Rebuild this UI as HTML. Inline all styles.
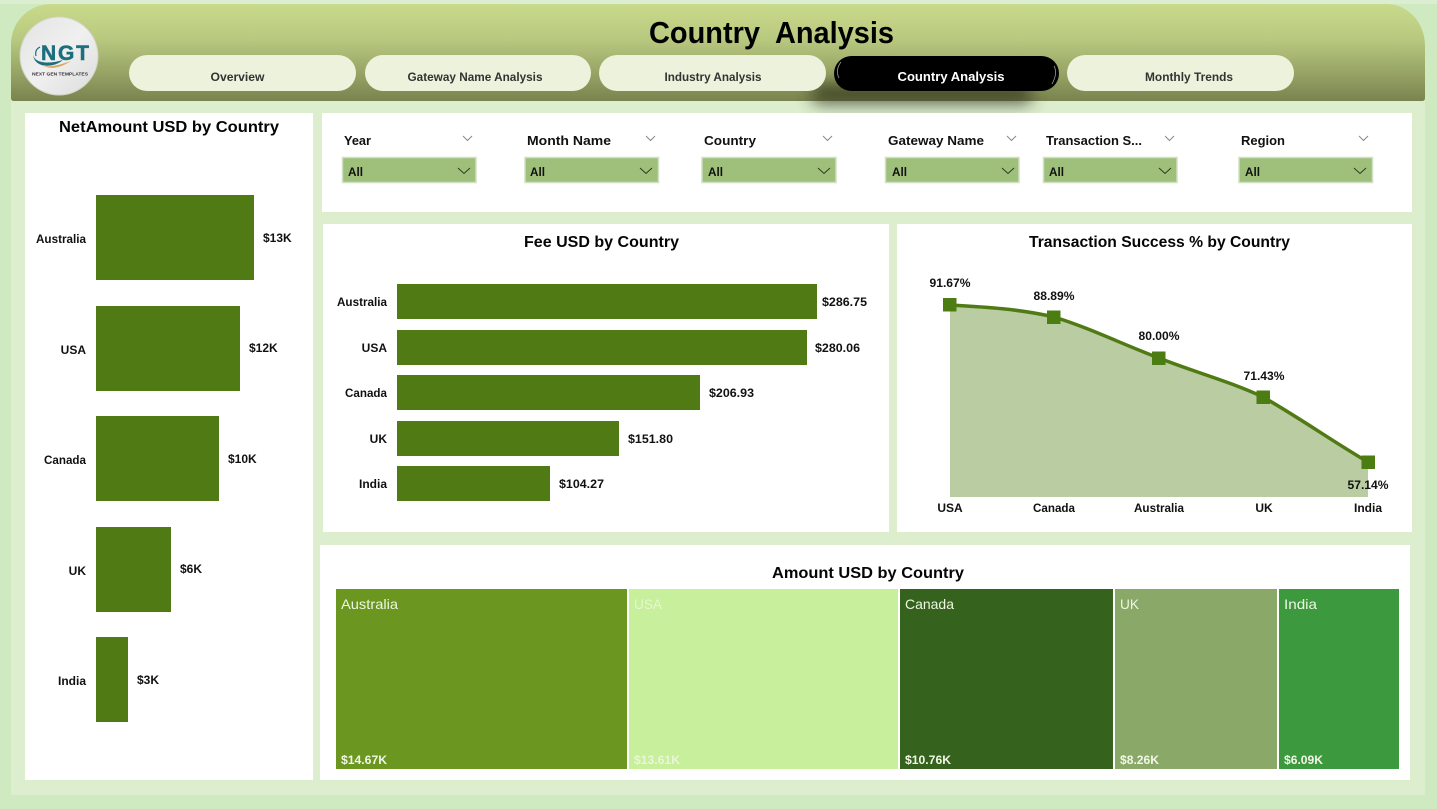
<!DOCTYPE html>
<html lang="en">
<head>
<meta charset="utf-8">
<title>Country Analysis</title>
<style>
html,body{margin:0;padding:0;background:#cfeac0;width:1437px;height:809px;overflow:hidden}
svg{display:block}
text{font-family:"Liberation Sans",Arial,sans-serif;font-weight:bold;fill:#111}
.t{font-size:16px;fill:#050505}
.l{font-size:12px}
.p{font-size:12px;fill:#333}
.s{font-size:13px}
.a{font-size:11.5px}
.n{font-size:14px;font-weight:normal;fill:#eef5e2}
.v{font-size:11.5px;fill:#f0f6e6}
</style>
</head>
<body>
<svg width="1437" height="809" viewBox="0 0 1437 809" xmlns="http://www.w3.org/2000/svg">
<defs>
<linearGradient id="h" x1="0" y1="0" x2="0" y2="1">
<stop offset="0" stop-color="#c9da8b"/>
<stop offset=".35" stop-color="#b9ca80"/>
<stop offset=".7" stop-color="#98a566"/>
<stop offset="1" stop-color="#79834f"/>
</linearGradient>
<linearGradient id="c" x1="0" y1="0" x2="1" y2="1">
<stop offset="0" stop-color="#e3e3e3"/>
<stop offset=".5" stop-color="#f0f0f0"/>
<stop offset="1" stop-color="#dcdcdc"/>
</linearGradient>
<filter id="b" x="-30%" y="-80%" width="160%" height="260%"><feGaussianBlur stdDeviation="8"/></filter>
</defs>

<rect width="1437" height="809" fill="#cfeac0"/>
<rect x="0" y="0" width="1437" height="4" fill="#dbeed1"/>
<rect x="11" y="60" width="1414" height="735" fill="#ddeecf"/>

<path d="M11 98V44A40 40 0 0 1 51 4H1387A38 42 0 0 1 1425 46V98Q1425 101 1422 101H14Q11 101 11 98Z" fill="url(#h)"/>

<circle cx="59" cy="56" r="39" fill="url(#c)" stroke="#d2d5c6" stroke-width="1"/>
<path d="M33 54C34 64 50 64 63 60C54 68 34 69 33 54Z" fill="#1d6f7d"/>
<path d="M44 66C54 67 62 64 71 61C62 67 52 70 44 66Z" fill="#d9a860"/>
<path d="M40 47C36 49 35 52 36 56" fill="none" stroke="#1d6f7d" stroke-width="1.200"/>
<text x="41" y="60" style="font-size:21px;fill:#1d6f7d;stroke:#1d6f7d;stroke-width:.5px;font-weight:bold" textLength="48" lengthAdjust="spacing">NGT</text>
<text x="32" y="75.500" style="font-size:4.500px;fill:#333" textLength="56" lengthAdjust="spacingAndGlyphs">NEXT GEN TEMPLATES</text>

<text x="771.500" y="43" text-anchor="middle" xml:space="preserve" style="font-size:31px;fill:#000" textLength="245" lengthAdjust="spacingAndGlyphs">Country  Analysis</text>

<rect x="812" y="84" width="220" height="20" rx="6" fill="#30351f" opacity=".75" filter="url(#b)"/>

<rect x="129" y="55" width="227" height="36" rx="18" fill="#ecf2dc"/>
<rect x="365" y="55" width="226" height="36" rx="18" fill="#ecf2dc"/>
<rect x="599" y="55" width="227" height="36" rx="18" fill="#ecf2dc"/>
<rect x="834" y="56" width="225" height="35" rx="17.500" fill="#000"/>
<path d="M839 78Q835 70 841 62" fill="none" stroke="#9a9e92" stroke-width=".8"/>
<path d="M1054 66Q1058 73 1052 84" fill="none" stroke="#9a9e92" stroke-width=".8"/>
<rect x="1067" y="55" width="227" height="36" rx="18" fill="#ecf2dc"/>
<text class="p" x="237.500" y="81" text-anchor="middle" textLength="54" lengthAdjust="spacingAndGlyphs">Overview</text>
<text class="p" x="475" y="81" text-anchor="middle" textLength="135" lengthAdjust="spacingAndGlyphs">Gateway Name Analysis</text>
<text class="p" x="713" y="81" text-anchor="middle" textLength="97" lengthAdjust="spacingAndGlyphs">Industry Analysis</text>
<text x="951" y="81" text-anchor="middle" style="font-size:13px;fill:#fff" textLength="107" lengthAdjust="spacingAndGlyphs">Country Analysis</text>
<text class="p" x="1189" y="81" text-anchor="middle" textLength="88" lengthAdjust="spacingAndGlyphs">Monthly Trends</text>

<rect x="25" y="113" width="288" height="667" fill="#fff"/>
<rect x="322" y="113" width="1090" height="99" fill="#fff"/>
<rect x="323" y="224" width="566" height="308" fill="#fff"/>
<rect x="897" y="224" width="515" height="308" fill="#fff"/>
<rect x="320" y="545" width="1090" height="235" fill="#fff"/>

<text class="t" x="169" y="132" text-anchor="middle" textLength="220" lengthAdjust="spacingAndGlyphs">NetAmount USD by Country</text>
<g fill="#507a14">
<rect x="96" y="195" width="158" height="85"/>
<rect x="96" y="306" width="144" height="85"/>
<rect x="96" y="416" width="123" height="85"/>
<rect x="96" y="527" width="75" height="85"/>
<rect x="96" y="637" width="32" height="85"/>
</g>
<g text-anchor="end">
<text class="l" x="86" y="243" textLength="50" lengthAdjust="spacingAndGlyphs">Australia</text>
<text class="l" x="86" y="354">USA</text>
<text class="l" x="86" y="464" textLength="42" lengthAdjust="spacingAndGlyphs">Canada</text>
<text class="l" x="86" y="575">UK</text>
<text class="l" x="86" y="685">India</text>
</g>
<text class="l" x="263" y="242">$13K</text>
<text class="l" x="249" y="352">$12K</text>
<text class="l" x="228" y="463">$10K</text>
<text class="l" x="180" y="573">$6K</text>
<text class="l" x="137" y="684">$3K</text>

<text class="s" x="344" y="145" textLength="27" lengthAdjust="spacingAndGlyphs">Year</text>
<text class="s" x="527" y="145" textLength="84" lengthAdjust="spacingAndGlyphs">Month Name</text>
<text class="s" x="704" y="145" textLength="52" lengthAdjust="spacingAndGlyphs">Country</text>
<text class="s" x="888" y="145" textLength="96" lengthAdjust="spacingAndGlyphs">Gateway Name</text>
<text class="s" x="1046" y="145" textLength="96" lengthAdjust="spacingAndGlyphs">Transaction S...</text>
<text class="s" x="1241" y="145" textLength="44" lengthAdjust="spacingAndGlyphs">Region</text>
<g fill="none" stroke="#8a8a8a" stroke-width="1">
<path d="M463 136l4.500 4.500 4.500-4.500M646 136l4.500 4.500 4.500-4.500M823 136l4.500 4.500 4.500-4.500M1007 136l4.500 4.500 4.500-4.500M1165 136l4.500 4.500 4.500-4.500M1359 136l4.500 4.500 4.500-4.500"/>
</g>
<g fill="#9fc07b" stroke="#d0e0c2" stroke-width="1.500">
<rect x="342.500" y="157.500" width="133.500" height="25"/>
<rect x="525" y="157.500" width="133.500" height="25"/>
<rect x="702" y="157.500" width="134" height="25"/>
<rect x="885.500" y="157.500" width="133.500" height="25"/>
<rect x="1043.500" y="157.500" width="133.500" height="25"/>
<rect x="1239" y="157.500" width="133.500" height="25"/>
</g>
<text class="l" x="348" y="176" textLength="15" lengthAdjust="spacingAndGlyphs">All</text>
<text class="l" x="530" y="176" textLength="15" lengthAdjust="spacingAndGlyphs">All</text>
<text class="l" x="708" y="176" textLength="15" lengthAdjust="spacingAndGlyphs">All</text>
<text class="l" x="892" y="176" textLength="15" lengthAdjust="spacingAndGlyphs">All</text>
<text class="l" x="1049" y="176" textLength="15" lengthAdjust="spacingAndGlyphs">All</text>
<text class="l" x="1245" y="176" textLength="15" lengthAdjust="spacingAndGlyphs">All</text>
<g fill="none" stroke="#2c3a1d" stroke-width="1">
<path d="M458 168l6 5.500 6-5.500M640 168l6 5.500 6-5.500M818 168l6 5.500 6-5.500M1002 168l6 5.500 6-5.500M1159 168l6 5.500 6-5.500M1354 168l6 5.500 6-5.500"/>
</g>

<text class="t" x="601.500" y="247" text-anchor="middle" textLength="155" lengthAdjust="spacingAndGlyphs">Fee USD by Country</text>
<g fill="#507a14">
<rect x="397" y="284" width="420" height="35"/>
<rect x="397" y="330" width="410" height="35"/>
<rect x="397" y="375" width="303" height="35"/>
<rect x="397" y="421" width="222" height="35"/>
<rect x="397" y="466" width="153" height="35"/>
</g>
<text class="l" x="387" y="306" text-anchor="end" textLength="50" lengthAdjust="spacingAndGlyphs">Australia</text>
<text class="l" x="387" y="352" text-anchor="end">USA</text>
<text class="l" x="387" y="397" text-anchor="end" textLength="42" lengthAdjust="spacingAndGlyphs">Canada</text>
<text class="l" x="387" y="443" text-anchor="end">UK</text>
<text class="l" x="387" y="488" text-anchor="end">India</text>
<text class="l" x="822" y="306" textLength="45" lengthAdjust="spacingAndGlyphs">$286.75</text>
<text class="l" x="815" y="352" textLength="45" lengthAdjust="spacingAndGlyphs">$280.06</text>
<text class="l" x="709" y="397" textLength="45" lengthAdjust="spacingAndGlyphs">$206.93</text>
<text class="l" x="628" y="443" textLength="45" lengthAdjust="spacingAndGlyphs">$151.80</text>
<text class="l" x="559" y="488" textLength="45" lengthAdjust="spacingAndGlyphs">$104.27</text>

<text class="t" x="1159.500" y="247" text-anchor="middle" textLength="261" lengthAdjust="spacingAndGlyphs">Transaction Success % by Country</text>
<path d="M950 305C985 307 1020 309 1054 317C1090 328 1124 345 1159 358C1194 372 1229 381 1263 397C1300 418 1335 443 1368 462V497H950Z" fill="#b9cca2"/>
<path d="M950 305C985 307 1020 309 1054 317C1090 328 1124 345 1159 358C1194 372 1229 381 1263 397C1300 418 1335 443 1368 462" fill="none" stroke="#507a14" stroke-width="3.500"/>
<g fill="#4c7d12">
<rect x="943" y="298" width="13.500" height="13.500"/>
<rect x="1047" y="310.500" width="13.500" height="13.500"/>
<rect x="1152" y="351.500" width="13.500" height="13.500"/>
<rect x="1256.500" y="390.500" width="13.500" height="13.500"/>
<rect x="1361.500" y="455.500" width="13.500" height="13.500"/>
</g>
<text class="a" x="950" y="287" text-anchor="middle" textLength="41" lengthAdjust="spacingAndGlyphs">91.67%</text>
<text class="a" x="1054" y="300" text-anchor="middle" textLength="41" lengthAdjust="spacingAndGlyphs">88.89%</text>
<text class="a" x="1159" y="340" text-anchor="middle" textLength="41" lengthAdjust="spacingAndGlyphs">80.00%</text>
<text class="a" x="1264" y="380" text-anchor="middle" textLength="41" lengthAdjust="spacingAndGlyphs">71.43%</text>
<text class="a" x="1368" y="489" text-anchor="middle" textLength="41" lengthAdjust="spacingAndGlyphs">57.14%</text>
<text class="l" x="950" y="512" text-anchor="middle">USA</text>
<text class="l" x="1054" y="512" text-anchor="middle" textLength="42" lengthAdjust="spacingAndGlyphs">Canada</text>
<text class="l" x="1159" y="512" text-anchor="middle" textLength="50" lengthAdjust="spacingAndGlyphs">Australia</text>
<text class="l" x="1264" y="512" text-anchor="middle">UK</text>
<text class="l" x="1368" y="512" text-anchor="middle">India</text>

<text class="t" x="868" y="578" text-anchor="middle" textLength="192" lengthAdjust="spacingAndGlyphs">Amount USD by Country</text>
<rect x="336" y="589" width="291" height="180" fill="#6b9620"/>
<rect x="629" y="589" width="269" height="180" fill="#c8ef9c"/>
<rect x="900" y="589" width="213" height="180" fill="#35621c"/>
<rect x="1115" y="589" width="162" height="180" fill="#8aa969"/>
<rect x="1279" y="589" width="120" height="180" fill="#3d993e"/>
<text class="n" x="341" y="609" textLength="57" lengthAdjust="spacingAndGlyphs">Australia</text>
<text class="n" x="634" y="609" style="fill:#e6f6d2" textLength="28" lengthAdjust="spacingAndGlyphs">USA</text>
<text class="n" x="905" y="609" textLength="49" lengthAdjust="spacingAndGlyphs">Canada</text>
<text class="n" x="1120" y="609" textLength="19" lengthAdjust="spacingAndGlyphs">UK</text>
<text class="n" x="1284" y="609" textLength="33" lengthAdjust="spacingAndGlyphs">India</text>
<text class="v" x="341" y="764" textLength="46" lengthAdjust="spacingAndGlyphs">$14.67K</text>
<text class="v" x="634" y="764" style="fill:#e9f7d8" textLength="46" lengthAdjust="spacingAndGlyphs">$13.61K</text>
<text class="v" x="905" y="764" textLength="46" lengthAdjust="spacingAndGlyphs">$10.76K</text>
<text class="v" x="1120" y="764" textLength="39" lengthAdjust="spacingAndGlyphs">$8.26K</text>
<text class="v" x="1284" y="764" textLength="39" lengthAdjust="spacingAndGlyphs">$6.09K</text>
</svg>
</body>
</html>
